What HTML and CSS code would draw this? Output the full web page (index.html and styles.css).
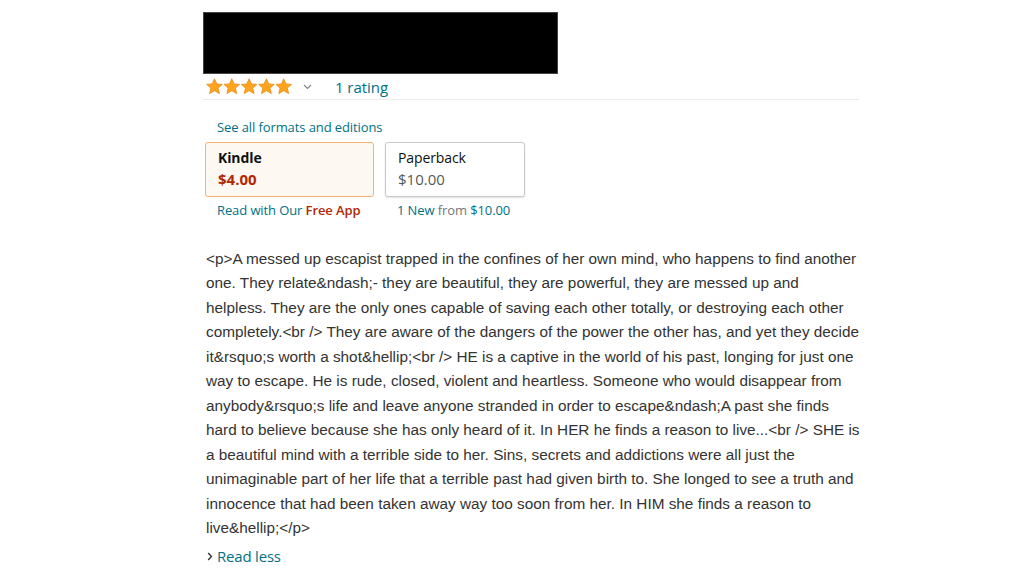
FILE: index.html
```html
<!DOCTYPE html>
<html lang="en">
<head>
<meta charset="utf-8">
<title>Book</title>
<link rel="stylesheet" href="styles.css">
</head>
<body>
<div class="page">
  <div class="cover"></div>
  <div class="rating-row">
    <span class="stars">
      <svg width="88" height="17" viewBox="0 0 88 17">
        <defs>
          <path id="st" d="M8.5 0.8 L10.8 5.9 L16.3 6.4 L12.1 10.1 L13.4 15.6 L8.5 12.7 L3.6 15.6 L4.9 10.1 L0.7 6.4 L6.2 5.9 Z"/>
        </defs>
        <g fill="#FFA41C" stroke="#E88A12" stroke-width="0.8" stroke-linejoin="round">
          <use href="#st" x="0"/>
          <use href="#st" x="17.3"/>
          <use href="#st" x="34.6"/>
          <use href="#st" x="51.9"/>
          <use href="#st" x="69.2"/>
        </g>
      </svg>
    </span>
    <span class="chev">
      <svg width="9" height="6" viewBox="0 0 9 6"><path d="M1 1 L4.5 4.5 L8 1" fill="none" stroke="#888" stroke-width="1.2"/></svg>
    </span>
    <a class="link rating-link">1 rating</a>
  </div>
  <div class="formats">
    <a class="link see-all">See all formats and editions</a>
    <div class="swatches">
      <div class="swatch">
        <div class="box box-selected">
          <div class="fmt fmt-bold">Kindle</div>
          <div class="price price-red">$4.00</div>
        </div>
        <div class="sub"><a class="link">Read with Our <span class="red">Free App</span></a></div>
      </div>
      <div class="swatch">
        <div class="box box-plain">
          <div class="fmt">Paperback</div>
          <div class="price">$10.00</div>
        </div>
        <div class="sub"><a class="link">1 New</a> <span class="grey">from</span> <a class="link">$10.00</a></div>
      </div>
    </div>
  </div>
  <div class="desc">&lt;p&gt;A messed up escapist trapped in the confines of her own mind, who happens to find another one. They relate&amp;ndash;- they are beautiful, they are powerful, they are messed up and helpless. They are the only ones capable of saving each other totally, or destroying each other completely.&lt;br /&gt; They are aware of the dangers of the power the other has, and yet they decide it&amp;rsquo;s worth a shot&amp;hellip;&lt;br /&gt; HE is a captive in the world of his past, longing for just one way to escape. He is rude, closed, violent and heartless. Someone who would disappear from anybody&amp;rsquo;s life and leave anyone stranded in order to escape&amp;ndash;A past she finds hard to believe because she has only heard of it. In HER he finds a reason to live...&lt;br /&gt; SHE is a beautiful mind with a terrible side to her. Sins, secrets and addictions were all just the unimaginable part of her life that a terrible past had given birth to. She longed to see a truth and innocence that had been taken away way too soon from her. In HIM she finds a reason to live&amp;hellip;&lt;/p&gt;</div>
  <div class="read-less">
    <svg class="rl-chev" width="6" height="9" viewBox="0 0 6 9"><path d="M1.2 1 L4.4 4.5 L1.2 8" fill="none" stroke="#333" stroke-width="1.4"/></svg>
    <a class="link">Read less</a>
  </div>
</div>
</body>
</html>
```

FILE: styles.css
```css
html, body {
  margin: 0;
  padding: 0;
  background: #fff;
}

.page {
  margin-left: 203px;
  width: 656px;
  padding-top: 12px;
  font-family: "Open Sans", "Noto Sans", Arial, sans-serif;
  color: #0F1111;
}

.cover {
  width: 355px;
  height: 62px;
  background: #000;
  box-shadow: inset 0 0 0 1px #444;
}

.link {
  color: #007185;
  text-decoration: none;
}

.rating-row {
  display: flex;
  align-items: center;
  height: 25px;
  padding-left: 3px;
  border-bottom: 1px solid #ececec;
}

.stars {
  display: flex;
  align-items: center;
  width: 97px;
}

.stars svg {
  display: block;
}

.chev {
  display: flex;
  align-items: center;
  width: 32px;
}

.rating-link {
  font-size: 15px;
  letter-spacing: -0.05px;
}

.formats {
  padding-left: 14px;
  padding-top: 18px;
}

.see-all {
  display: block;
  font-size: 13px;
  line-height: 18px;
  letter-spacing: -0.1px;
}

.swatches {
  display: flex;
  gap: 11px;
  margin-left: -12px;
  margin-top: 6px;
}

.swatch {
  display: flex;
  flex-direction: column;
}

.box {
  height: 55px;
  box-sizing: border-box;
  border-radius: 3px;
  padding: 5px 12px 0;
}

.box-selected {
  width: 169px;
  border: 1px solid #F5B26E;
  background: #FEF8F2;
}

.box-plain {
  width: 140px;
  border: 1px solid #C7CBCB;
  box-shadow: 0 1px 2px rgba(0,0,0,0.12);
  background: #fff;
}

.fmt {
  font-size: 14px;
  line-height: 20px;
  color: #0F1111;
  letter-spacing: -0.1px;
}

.fmt-bold {
  font-weight: 700;
}

.price {
  font-size: 15px;
  line-height: 22px;
  color: #565959;
}

.price-red {
  color: #B12704;
  font-weight: 700;
}

.sub {
  font-size: 13px;
  line-height: 18px;
  padding-left: 12px;
  margin-top: 4px;
  letter-spacing: -0.1px;
}

.red {
  color: #B12704;
  font-weight: 600;
}

.grey {
  color: #767676;
}

.desc {
  margin-top: 28px;
  padding-left: 3px;
  width: 655px;
  font-family: "Liberation Sans", Arial, sans-serif;
  font-size: 15.33px;
  line-height: 24.45px;
  color: #333;
}

.read-less {
  display: flex;
  align-items: center;
  gap: 4px;
  padding-left: 4px;
  margin-top: 6px;
  font-size: 15px;
  line-height: 20px;
  letter-spacing: -0.2px;
}

.rl-chev {
  display: block;
}
```
